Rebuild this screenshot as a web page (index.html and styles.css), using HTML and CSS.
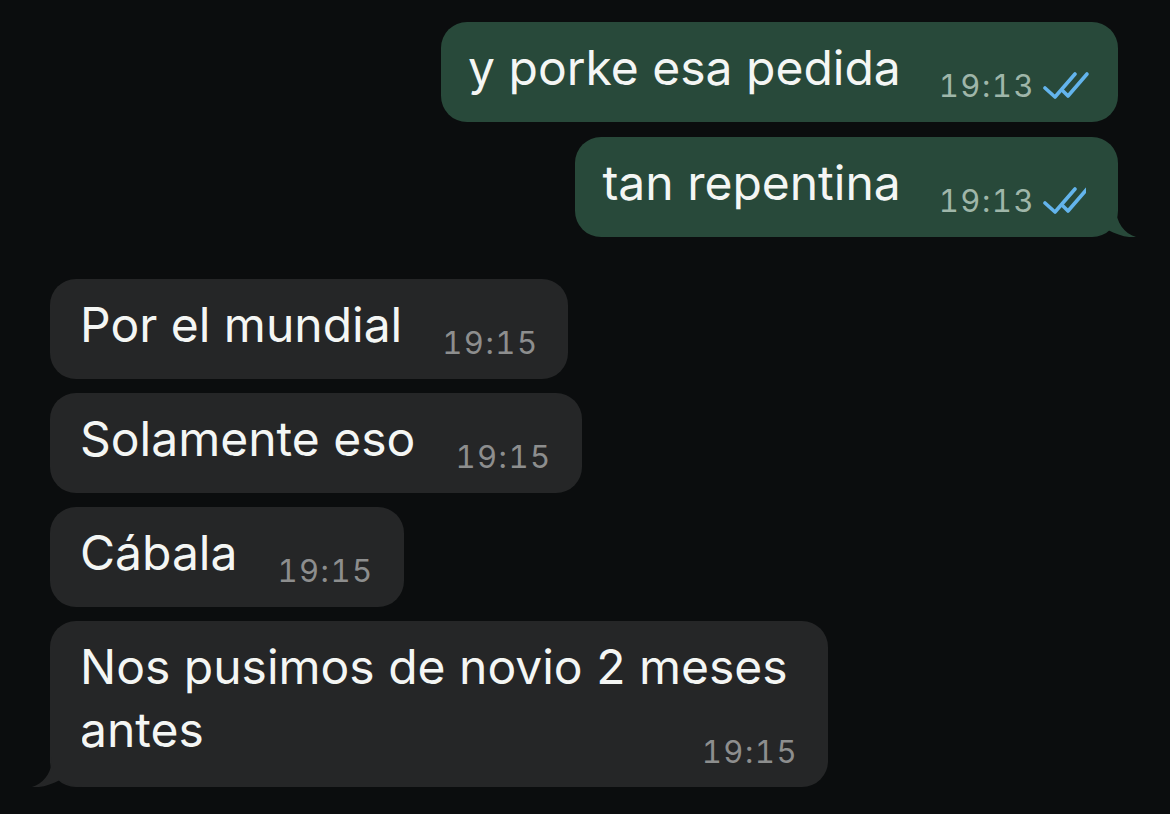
FILE: index.html
```html
<!DOCTYPE html>
<html lang="es">
<head>
  <meta charset="UTF-8">
  <meta name="viewport" content="width=device-width, initial-scale=1.0">
  <title>Chat</title>
  <link rel="stylesheet" href="styles.css">
</head>
<body>
  <div class="chat">
    <div class="bubble out">
      <span class="text">y porke esa pedida</span>
      <span class="meta">19:13
        <svg class="ticks" viewBox="0 0 48 28" width="48" height="28"><path d="M3 17 L13 26 L33 3"/><path d="M21 20 L26 25 L45 3"/></svg>
      </span>
    </div>
    <div class="bubble out tail">
      <span class="text">tan repentina</span>
      <span class="meta">19:13
        <svg class="ticks" viewBox="0 0 48 28" width="48" height="28"><path d="M3 17 L13 26 L33 3"/><path d="M21 20 L26 25 L45 3"/></svg>
      </span>
      <svg class="tail-shape" viewBox="0 0 52 50" width="52" height="50"><path d="M0 0 H30 V20 C30 36 38 46 50 50 C42 51 31 48 22 43 C16 47 8 50 0 50 Z"/></svg>
    </div>

    <div class="bubble in first">
      <span class="text">Por el mundial</span>
      <span class="meta">19:15</span>
    </div>
    <div class="bubble in">
      <span class="text">Solamente eso</span>
      <span class="meta">19:15</span>
    </div>
    <div class="bubble in">
      <span class="text">Cábala</span>
      <span class="meta">19:15</span>
    </div>
    <div class="bubble in tail multi">
      <span class="text">Nos pusimos de novio 2 meses</span>
      <span class="text">antes</span>
      <span class="meta">19:15</span>
      <svg class="tail-shape" viewBox="0 0 52 50" width="52" height="50"><path d="M0 0 H30 V20 C30 36 38 46 50 50 C42 51 31 48 22 43 C16 47 8 50 0 50 Z"/></svg>
    </div>
  </div>
</body>
</html>
```

FILE: styles.css
```css
body {
  margin: 0;
  height: 100vh;
  background: #0b0d0e;
  font-family: Inter, 'Noto Sans', sans-serif;
  overflow: hidden;
}
.chat {
  display: flex;
  flex-direction: column;
  gap: 14px;
  padding: 22px 52px 0 50px;
}
.bubble {
  position: relative;
  display: flex;
  align-items: flex-end;
  gap: 40px;
  padding: 14px 30px 23px 30px;
  border-radius: 26px;
  color: #f4f6f4;
  font-size: 48px;
  line-height: 63px;
  max-width: 718px;
}
.bubble.out {
  align-self: flex-end;
  background: #28493a;
  gap: 38px;
  padding-left: 27px;
  padding-right: 28px;
}
.bubble.out + .bubble.out {
  margin-top: 1px;
}
.bubble.in {
  align-self: flex-start;
  background: #252627;
}
.bubble.first {
  margin-top: 28px;
}
.meta {
  display: flex;
  align-items: flex-end;
  gap: 7px;
  font-size: 31px;
  line-height: 31px;
  font-variant-numeric: tabular-nums;
  letter-spacing: 1.5px;
  white-space: nowrap;
  margin-bottom: -2px;
}
.out .meta {
  color: #9fb6a9;
}
.in .meta {
  color: #8d8e8e;
}
.ticks {
  fill: none;
  stroke: #63b4ec;
  stroke-width: 3.6;
  stroke-linecap: round;
  stroke-linejoin: round;
  margin-bottom: 2px;
}
.tail-shape {
  position: absolute;
  bottom: 0;
  right: -20px;
}
.out .tail-shape {
  fill: #28493a;
}
.in .tail-shape {
  fill: #252627;
  right: auto;
  left: -20px;
  transform: scaleX(-1);
}
.bubble.multi {
  display: block;
  padding-bottom: 20px;
}
.multi .meta {
  display: inline-block;
  float: right;
  margin: 38px 0 0 0;
}
```
